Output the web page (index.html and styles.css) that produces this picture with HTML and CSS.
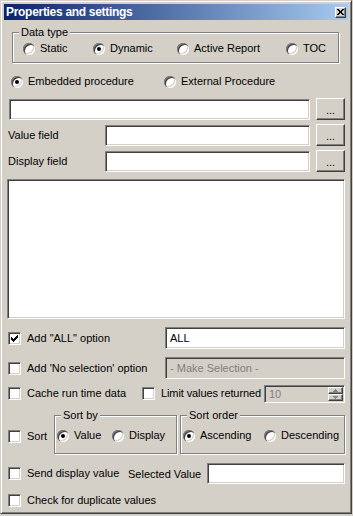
FILE: index.html
```html
<!DOCTYPE html>
<html lang="en">
<head>
    <meta charset="UTF-8">
    <meta name="viewport" content="width=device-width, initial-scale=1.0">
    <title>Properties and settings</title>
    <link rel="stylesheet" href="styles.css">
</head>
<body>
    <div class="window">
        <div class="titlebar">
            <span class="title">Properties and settings</span>
            <span class="closeBtn">
                <svg width="7" height="6" viewBox="0 0 7 6"><path d="M0 0h2v1h1v1h1V1h1V0h2v1H6v1H5v2h1v1h1v1H5V5H4V4H3v1H2v1H0V5h1V4h1V2H1V1H0z" fill="#000"/></svg>
            </span>
        </div>

        <div class="content">
            <fieldset class="group dataType">
                <legend>Data type</legend>
                <div class="radioRow">
                    <label class="opt"><span class="radio"></span>Static</label>
                    <label class="opt"><span class="radio checked"></span>Dynamic</label>
                    <label class="opt"><span class="radio"></span>Active Report</label>
                    <label class="opt"><span class="radio"></span>TOC</label>
                </div>
            </fieldset>

            <div class="procRow">
                <label class="opt"><span class="radio checked"></span>Embedded procedure</label>
                <label class="opt external"><span class="radio"></span>External Procedure</label>
            </div>

            <div class="fieldRow first">
                <div class="textbox wide"></div>
                <div class="btn">...</div>
            </div>
            <div class="fieldRow">
                <span class="fieldLabel">Value field</span>
                <div class="textbox"></div>
                <div class="btn">...</div>
            </div>
            <div class="fieldRow">
                <span class="fieldLabel">Display field</span>
                <div class="textbox"></div>
                <div class="btn">...</div>
            </div>

            <div class="listbox"></div>

            <div class="optRow allRow">
                <label class="opt checkCell"><span class="check checked"><svg width="7" height="7" viewBox="0 0 7 7"><path d="M0 2h1v3H0zM1 3h1v3H1zM2 4h1v3H2zM3 3h1v3H3zM4 2h1v3H4zM5 1h1v3H5zM6 0h1v3H6z" fill="#000"/></svg></span>Add "ALL" option</label>
                <div class="textbox">ALL</div>
            </div>
            <div class="optRow noSelRow">
                <label class="opt checkCell"><span class="check"></span>Add 'No selection' option</label>
                <div class="textbox disabled">- Make Selection -</div>
            </div>
            <div class="optRow cacheRow">
                <label class="opt cacheCell"><span class="check"></span>Cache run time data</label>
                <label class="opt limitCell"><span class="check"></span>Limit values returned</label>
                <div class="textbox disabled limitBox">
                    10
                    <span class="spinner">
                        <span class="spinBtn"><svg width="5" height="3" viewBox="0 0 5 3"><path d="M2 0h1v1h1v1h1v1H0V2h1V1h1z" fill="#808080"/></svg></span>
                        <span class="spinBtn"><svg width="5" height="3" viewBox="0 0 5 3"><path d="M0 0h5v1H4v1H3v1H2V2H1V1H0z" fill="#808080"/></svg></span>
                    </span>
                </div>
            </div>

            <div class="sortRow">
                <label class="opt sortCheck"><span class="check"></span>Sort</label>
                <fieldset class="group sortBy">
                    <legend>Sort by</legend>
                    <div class="radioRow">
                        <label class="opt"><span class="radio checked"></span>Value</label>
                        <label class="opt"><span class="radio"></span>Display</label>
                    </div>
                </fieldset>
                <fieldset class="group sortOrder">
                    <legend>Sort order</legend>
                    <div class="radioRow">
                        <label class="opt"><span class="radio checked"></span>Ascending</label>
                        <label class="opt"><span class="radio"></span>Descending</label>
                    </div>
                </fieldset>
            </div>

            <div class="optRow sendRow">
                <label class="opt sendCell"><span class="check"></span>Send display value</label>
                <span class="selLabel">Selected Value</span>
                <div class="textbox"></div>
            </div>
            <div class="optRow dupRow">
                <label class="opt"><span class="check"></span>Check for duplicate values</label>
            </div>
        </div>
    </div>
</body>
</html>
```

FILE: styles.css
```css
body {
    margin: 0;
    padding: 0;
    background-color: #d4d0c8;
    font-family: 'Liberation Sans', Arial, sans-serif;
    font-size: 11px;
    color: #000;
}
.window {
    width: 352px;
    height: 514px;
    box-sizing: border-box;
    border: 1px solid;
    border-color: #d4d0c8 #404040 #404040 #d4d0c8;
    box-shadow: inset 1px 1px 0 #fff, inset -1px -1px 0 #808080;
    padding: 3px;
    background-color: #d4d0c8;
}
.titlebar {
    height: 16px;
    display: flex;
    align-items: center;
    justify-content: space-between;
    padding: 0 2px;
    background: linear-gradient(to right, #0a246a, #a6caf0);
}
.title {
    color: #fff;
    font-weight: bold;
    font-size: 12px;
    letter-spacing: -0.3px;
    line-height: 14px;
}
.closeBtn {
    width: 11px;
    height: 11px;
    box-sizing: border-box;
    display: flex;
    align-items: center;
    justify-content: center;
    background-color: #d4d0c8;
    border: 1px solid;
    border-color: #fff #404040 #404040 #fff;
    box-shadow: inset -1px -1px 0 #808080;
}
.content {
    padding: 0 3px 0 4px;
}

/* group boxes */
.group {
    min-width: 0;
    margin: 0;
    border: 1px solid #808080;
    box-shadow: inset 1px 1px 0 #fff, 1px 1px 0 #fff;
}
.group legend {
    padding: 0 2px;
    line-height: 13px;
    background-color: #d4d0c8;
}
.dataType {
    margin: 6px 6px 0 4px;
    padding: 3px 0 7px 6px;
}
.dataType .radioRow {
    display: grid;
    grid-template-columns: 70px 84px 109px auto;
    margin-left: 4px;
}

/* radios and checks */
.opt {
    display: flex;
    align-items: center;
    line-height: 13px;
    height: 13px;
    white-space: nowrap;
}
.radio {
    position: relative;
    flex: none;
    width: 12px;
    height: 12px;
    margin-right: 5px;
    border-radius: 50%;
    background-color: #fff;
    box-shadow: inset 1px 1px 0 #808080, inset 2px 2px 0 #404040, inset -1px -1px 0 #fff, inset -2px -2px 0 #d4d0c8;
}
.radio.checked::after {
    content: '';
    position: absolute;
    left: 4px;
    top: 4px;
    width: 4px;
    height: 4px;
    border-radius: 50%;
    background-color: #000;
}
.check {
    flex: none;
    width: 13px;
    height: 13px;
    box-sizing: border-box;
    margin-right: 6px;
    display: flex;
    align-items: center;
    justify-content: center;
    background-color: #fff;
    border: 1px solid;
    border-color: #808080 #fff #fff #808080;
    box-shadow: inset 1px 1px 0 #404040, inset -1px -1px 0 #d4d0c8;
}

.procRow {
    display: flex;
    margin: 12px 0 0 3px;
}
.procRow .opt:first-child {
    width: 153px;
}

/* text fields and buttons */
.textbox {
    height: 21px;
    box-sizing: border-box;
    display: flex;
    align-items: center;
    padding: 0 1px 0 4px;
    background-color: #fff;
    border: 1px solid;
    border-color: #808080 #fff #fff #808080;
    box-shadow: inset 1px 1px 0 #404040, inset -1px -1px 0 #d4d0c8;
}
.textbox.disabled {
    background-color: #d4d0c8;
    color: #808080;
}
.btn {
    width: 29px;
    height: 22px;
    box-sizing: border-box;
    margin-left: 6px;
    padding-top: 3px;
    text-align: center;
    line-height: 16px;
    font-size: 11px;
    background-color: #d4d0c8;
    border: 1px solid;
    border-color: #fff #404040 #404040 #fff;
    box-shadow: inset -1px -1px 0 #808080;
}
.fieldRow {
    display: flex;
    align-items: center;
    height: 22px;
    margin-top: 4px;
}
.fieldRow.first {
    margin-top: 10px;
}
.fieldRow .textbox {
    width: 206px;
}
.fieldRow .textbox.wide {
    width: 302px;
    margin-left: 1px;
}
.fieldLabel {
    width: 97px;
}
.listbox {
    height: 140px;
    margin: 7px 0 0 -1px;
    box-sizing: border-box;
    background-color: #fff;
    border: 1px solid;
    border-color: #808080 #fff #fff #808080;
    box-shadow: inset 1px 1px 0 #404040, inset -1px -1px 0 #d4d0c8;
}

/* option rows */
.optRow {
    display: flex;
    align-items: center;
}
.checkCell {
    width: 157px;
}
.allRow, .noSelRow {
    margin-top: 8px;
}
.allRow .textbox, .noSelRow .textbox {
    flex: 1;
    height: 22px;
}
.cacheRow {
    margin-top: 5px;
    height: 19px;
}
.cacheCell {
    width: 134px;
}
.limitCell {
    width: 122px;
    letter-spacing: -0.1px;
}
.limitBox {
    flex: 1;
    height: 18px;
}
.spinner {
    margin-left: auto;
    display: flex;
    flex-direction: column;
}
.spinBtn {
    width: 15px;
    height: 7px;
    box-sizing: border-box;
    display: flex;
    align-items: center;
    justify-content: center;
    background-color: #d4d0c8;
    border: 1px solid;
    border-color: #fff #404040 #404040 #fff;
    box-shadow: inset -1px -1px 0 #808080;
}

/* sort groups */
.sortRow {
    display: flex;
    align-items: flex-start;
    margin-top: 6px;
}
.sortCheck {
    width: 46px;
    margin-top: 21px;
}
.sortRow .group {
    padding: 7px 0 11px 2px;
}
.sortRow .group legend {
    margin-left: 4px;
}
.sortRow .radioRow {
    display: grid;
}
.sortBy {
    width: 123px;
    box-sizing: border-box;
}
.sortBy .radioRow {
    grid-template-columns: 55px auto;
}
.sortOrder {
    width: 165px;
    box-sizing: border-box;
    margin-left: 3px;
}
.sortOrder .radioRow {
    grid-template-columns: 81px auto;
}

.sendRow {
    margin-top: 9px;
}
.sendCell {
    width: 120px;
}
.selLabel {
    width: 79px;
}
.sendRow .textbox {
    flex: 1;
}
.dupRow {
    margin-top: 10px;
}
```
